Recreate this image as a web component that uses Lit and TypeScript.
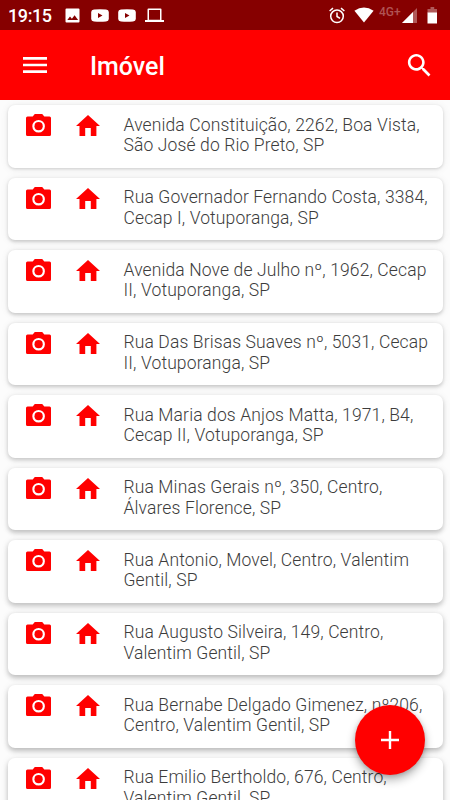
import { LitElement, html, css, svg } from "lit";
import { customElement, property } from "lit/decorators.js";

const ADDRESSES: [string, string][] = [
  ["Avenida Constituição, 2262, Boa Vista,", "São José do Rio Preto, SP"],
  ["Rua Governador Fernando Costa, 3384,", "Cecap I, Votuporanga, SP"],
  ["Avenida Nove de Julho nº, 1962, Cecap", "II, Votuporanga, SP"],
  ["Rua Das Brisas Suaves nº, 5031, Cecap", "II, Votuporanga, SP"],
  ["Rua Maria dos Anjos Matta, 1971, B4,", "Cecap II, Votuporanga, SP"],
  ["Rua Minas Gerais nº, 350, Centro,", "Álvares Florence, SP"],
  ["Rua Antonio, Movel, Centro, Valentim", "Gentil, SP"],
  ["Rua Augusto Silveira, 149, Centro,", "Valentim Gentil, SP"],
  ["Rua Bernabe Delgado Gimenez, nº206,", "Centro, Valentim Gentil, SP"],
  ["Rua Emilio Bertholdo, 676, Centro,", "Valentim Gentil, SP"],
];

const youtube = svg`<path fill-rule="evenodd" d="M3 .4Q9 0 15 .4 17.700.600 17.800 3v7q-.1 2.400-2.800 2.600Q9 13 3 12.600.300 12.400.200 10V3Q.300.600 3 .4zM7 4v5l4.500-2.500z"/>`;

@customElement("status-bar")
export class StatusBar extends LitElement {
  static styles = css`
    :host { display: flex; height: 30px; background: #860000; color: #fff; font: 500 18px/30px Roboto, sans-serif; padding: 0 12px 0 8px; box-sizing: border-box; align-items: center; }
    svg { display: block; fill: #fff; flex: none; }
    .time { width: 56.500px; padding-top: 1px; letter-spacing: -0.400px; }
    .image { margin-right: 11px; }
    .tube { margin-right: 9px; }
    .grow { flex: 1; }
    .net { font-size: 12px; line-height: 12px; color: #b05454; margin: 0 2px 7px 5px; width: 21px; white-space: nowrap; }
    .wifi { margin-left: 9px; }
    .battery { margin-left: 10px; }
  `;
  render() {
    return html`
      <span class="time">19:15</span>
      <svg class="image" width="15" height="15" viewBox="0 0 15 15"><path fill-rule="evenodd" d="M1.500.5h12q1 0 1 1v12q0 1-1 1h-12q-1 0-1-1v-12q0-1 1-1zM2.300 12h10.800L9.600 7.300 6.900 10.800 5 8.500z"/></svg>
      <svg class="tube" width="18" height="13" viewBox="0 0 18 13">${youtube}</svg>
      <svg class="tube" width="18" height="13" viewBox="0 0 18 13">${youtube}</svg>
      <svg width="19" height="15" viewBox="0 0 19 15"><path fill-rule="evenodd" d="M3.500.5h12q1 0 1 1V12H19v2H0v-2h2.500V1.500q0-1 1-1zM4 2v9.700h11V2z"/></svg>
      <span class="grow"></span>
      <svg width="16" height="17" viewBox="0 0 16 17"><g fill="none" stroke="#fff" stroke-width="1.500"><circle cx="8" cy="9.300" r="6.300"/><path d="M8 5.500v4l3 1.900M.6 4 4 1.200M15.400 4 12 1.200"/></g></svg>
      <svg class="wifi" width="20" height="16" viewBox="0 0 20 16"><path d="M10 15.500.4 3.800Q10-2.800 19.600 3.800z"/></svg>
      <span class="net">4G+</span>
      <svg width="15" height="15" viewBox="0 0 15 15"><path opacity=".35" d="M15 0v15H0z"/><path d="M11 4v11H0z"/></svg>
      <svg class="battery" width="11" height="17" viewBox="0 0 11 17"><path opacity=".35" d="M3.500 0h3.700v2H10v4H.5V2h3z"/><path d="M.5 5.500H10V16.500H.5z"/></svg>
    `;
  }
}

@customElement("address-card")
export class AddressCard extends LitElement {
  @property({ attribute: false }) lines: [string, string] = ["", ""];
  @property({ type: Number }) depth = 0;
  static styles = css`
    :host { display: block; }
    .card { display: flex; box-sizing: border-box; height: 62.500px; border-radius: 7px; background: #fff; padding: 9px 0 0 18.500px; }
    svg { display: block; fill: #f00; flex: none; }
    .home { margin: 1px 0 0 25px; }
    .text { margin: 0.600px 0 0 23.500px; font: 300 17.500px/20.500px Roboto, sans-serif; letter-spacing: 0.120px; color: #3c3c3c; white-space: nowrap; }
    .line { display: block; }
  `;
  render() {
    const d = this.depth;
    const shadow = `0 ${1 + d * 0.25}px ${3 + d * 0.3}px rgba(0,0,0,${0.15 + d * 0.008}), 0 1px 8px rgba(0,0,0,.08)`;
    return html`<div class="card" style="box-shadow:${shadow}">
      <svg width="25" height="22" viewBox="0 0 25 22"><path fill-rule="evenodd" d="M8.800 0h7.400L18.300 2.400H23.500Q25 2.400 25 3.900V20.500Q25 22 23.500 22H1.500Q0 22 0 20.500V3.900Q0 2.400 1.500 2.400H6.700zM12.600 5.900a6.300 6.300 0 1 0 0 12.600 6.300 6.300 0 1 0 0-12.600z"/><circle cx="12.600" cy="12.200" r="4.100"/></svg>
      <svg class="home" width="24" height="21" viewBox="0 0 24 21"><path d="M12 0 24 11.100H20.400V21H14.800V13H9.200V21H3.500V11.100H0z"/></svg>
      <div class="text"><span class="line">${this.lines[0]}</span><span class="line">${this.lines[1]}</span></div>
    </div>`;
  }
}

@customElement("app-root")
export class AppRoot extends LitElement {
  static styles = css`
    :host { display: flex; flex-direction: column; position: relative; height: 800px; width: 450px; overflow: hidden; background: #fff; font-family: Roboto, sans-serif; }
    status-bar { flex: none; }
    .bar { flex: none; display: flex; align-items: center; height: 70px; box-sizing: border-box; background: #f00; color: #fff; padding: 0 15px 0 19px; }
    svg { display: block; fill: #fff; }
    .title { flex: 1; margin: 3px 0 0 39px; font-size: 25px; font-weight: 500; line-height: 30px; }
    .list { flex: 1; min-height: 0; overflow: hidden; display: flex; flex-direction: column; gap: 10px; padding: 5px 7.500px 0; background: #fcfcfc; }
    address-card { flex: none; }
    .fab { position: absolute; right: 25px; bottom: 25px; width: 70px; height: 70px; border: 0; padding: 0; border-radius: 50%; background: #f00; display: grid; place-items: center; box-shadow: 0 5px 10px rgba(0,0,0,.3), 0 1px 4px rgba(0,0,0,.15); }
  `;
  render() {
    return html`
      <status-bar></status-bar>
      <header class="bar">
        <svg width="32" height="32" viewBox="0 0 24 24"><path d="M3 18h18v-2H3v2zm0-5h18v-2H3v2zm0-7v2h18V6H3z"/></svg>
        <span class="title">Imóvel</span>
        <svg width="31" height="31" viewBox="0 0 24 24"><path d="M15.500 14h-.79l-.28-.27C15.410 12.590 16 11.110 16 9.500 16 5.910 13.090 3 9.500 3S3 5.910 3 9.500 5.910 16 9.500 16c1.610 0 3.090-.59 4.230-1.570l.27.28v.79l5 4.990L20.490 19l-4.990-5zm-6 0C7.010 14 5 11.990 5 9.500S7.010 5 9.500 5 14 7.010 14 9.500 11.990 14 9.500 14z"/></svg>
      </header>
      <main class="list">
        ${ADDRESSES.map((a, i) => html`<address-card .lines=${a} .depth=${i}></address-card>`)}
      </main>
      <button class="fab" aria-label="Adicionar"><svg width="18" height="18" viewBox="0 0 18 18"><path d="M7.800 0h2.400v7.800H18v2.400h-7.800V18H7.800v-7.800H0V7.800h7.800z"/></svg></button>
    `;
  }
}
